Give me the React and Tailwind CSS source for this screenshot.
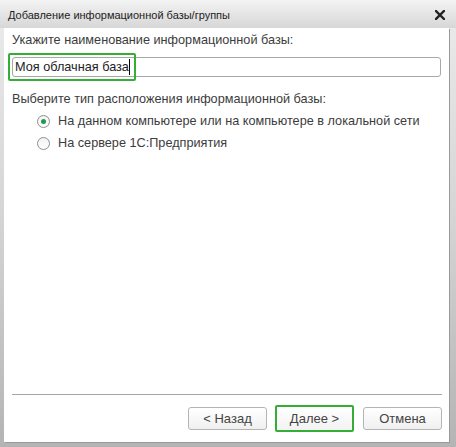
import React from "react";

function Radio({ checked, label }) {
  return (
    <div className="flex items-center h-[22px] ml-[25px]">
      <span className="w-[13px] h-[13px] rounded-full border border-[#8e8e8e] bg-gradient-to-b from-[#f2f2f2] to-white flex items-center justify-center">
        {checked && <span className="w-[5px] h-[5px] rounded-full bg-[#1e9a50]" />}
      </span>
      <span className="ml-2">{label}</span>
    </div>
  );
}

function Button({ children, active }) {
  if (active) {
    return (
      <button className="w-[79px] h-[27px] border-2 border-[#35ae35] rounded-[2px] bg-gradient-to-b from-white to-[#f3f3f3] text-[13px] text-[#444]">
        {children}
      </button>
    );
  }
  return (
    <button className="w-[79px] h-[23px] border border-[#b4b4b4] rounded-[3px] bg-gradient-to-b from-white to-[#f0f0f0] text-[13px] text-[#444]">
      {children}
    </button>
  );
}

export default function App() {
  return (
    <div className="w-[456px] h-[447px] flex flex-col bg-gradient-to-b from-[#ececec] via-[#d4d4d4] to-[#b4b4b4] font-['Liberation_Sans',Arial,sans-serif]">
      <div className="h-[28px] flex items-center justify-between pl-2 pr-[11px] bg-gradient-to-b from-[#f3f3f3] to-[#d7d7d7]">
        <span className="text-[11px] text-[#222] pt-[2px]">Добавление информационной базы/группы</span>
        <svg width="10" height="10" viewBox="0 0 10 10" className="mt-[1px]">
          <path d="M1 1 L9 9 M9 1 L1 9" stroke="#222" strokeWidth="2.4" strokeLinecap="square" />
        </svg>
      </div>

      <div className="flex-1 ml-1 mr-[7px] mb-[5px] bg-white flex flex-col text-[12.7px] leading-[15px] text-[#3c3c3c] shadow-[1px_1px_0_#9a9a9a]">
        <div className="px-2 pt-[5px] flex flex-col">
          <span>Укажите наименование информационной базы:</span>

          <div className="relative mt-[9px] h-[20px] border border-[#a8a8a8] rounded-[3px] flex items-center pl-[2px]">
            <span className="text-[#222]">Моя облачная база</span>
            <span className="w-px h-[16px] bg-black" />
            <div className="absolute left-[-5px] top-[-5px] w-[128px] h-[28px] border-2 border-[#35ae35] rounded-[2px]" />
          </div>

          <span className="mt-[15px]">Выберите тип расположения информационной базы:</span>

          <div className="mt-[3px] flex flex-col">
            <Radio checked label="На данном компьютере или на компьютере в локальной сети" />
            <Radio label="На сервере 1С:Предприятия" />
          </div>
        </div>

        <div className="flex-1" />

        <div className="ml-2 mr-[7px] h-px bg-[#a5a5a5]" />
        <div className="flex items-center justify-end gap-2 pr-[7px] mt-[10px] mb-[10px] h-[27px]">
          <Button>&lt; Назад</Button>
          <Button active>Далее &gt;</Button>
          <div className="ml-px">
            <Button>Отмена</Button>
          </div>
        </div>
      </div>
    </div>
  );
}
